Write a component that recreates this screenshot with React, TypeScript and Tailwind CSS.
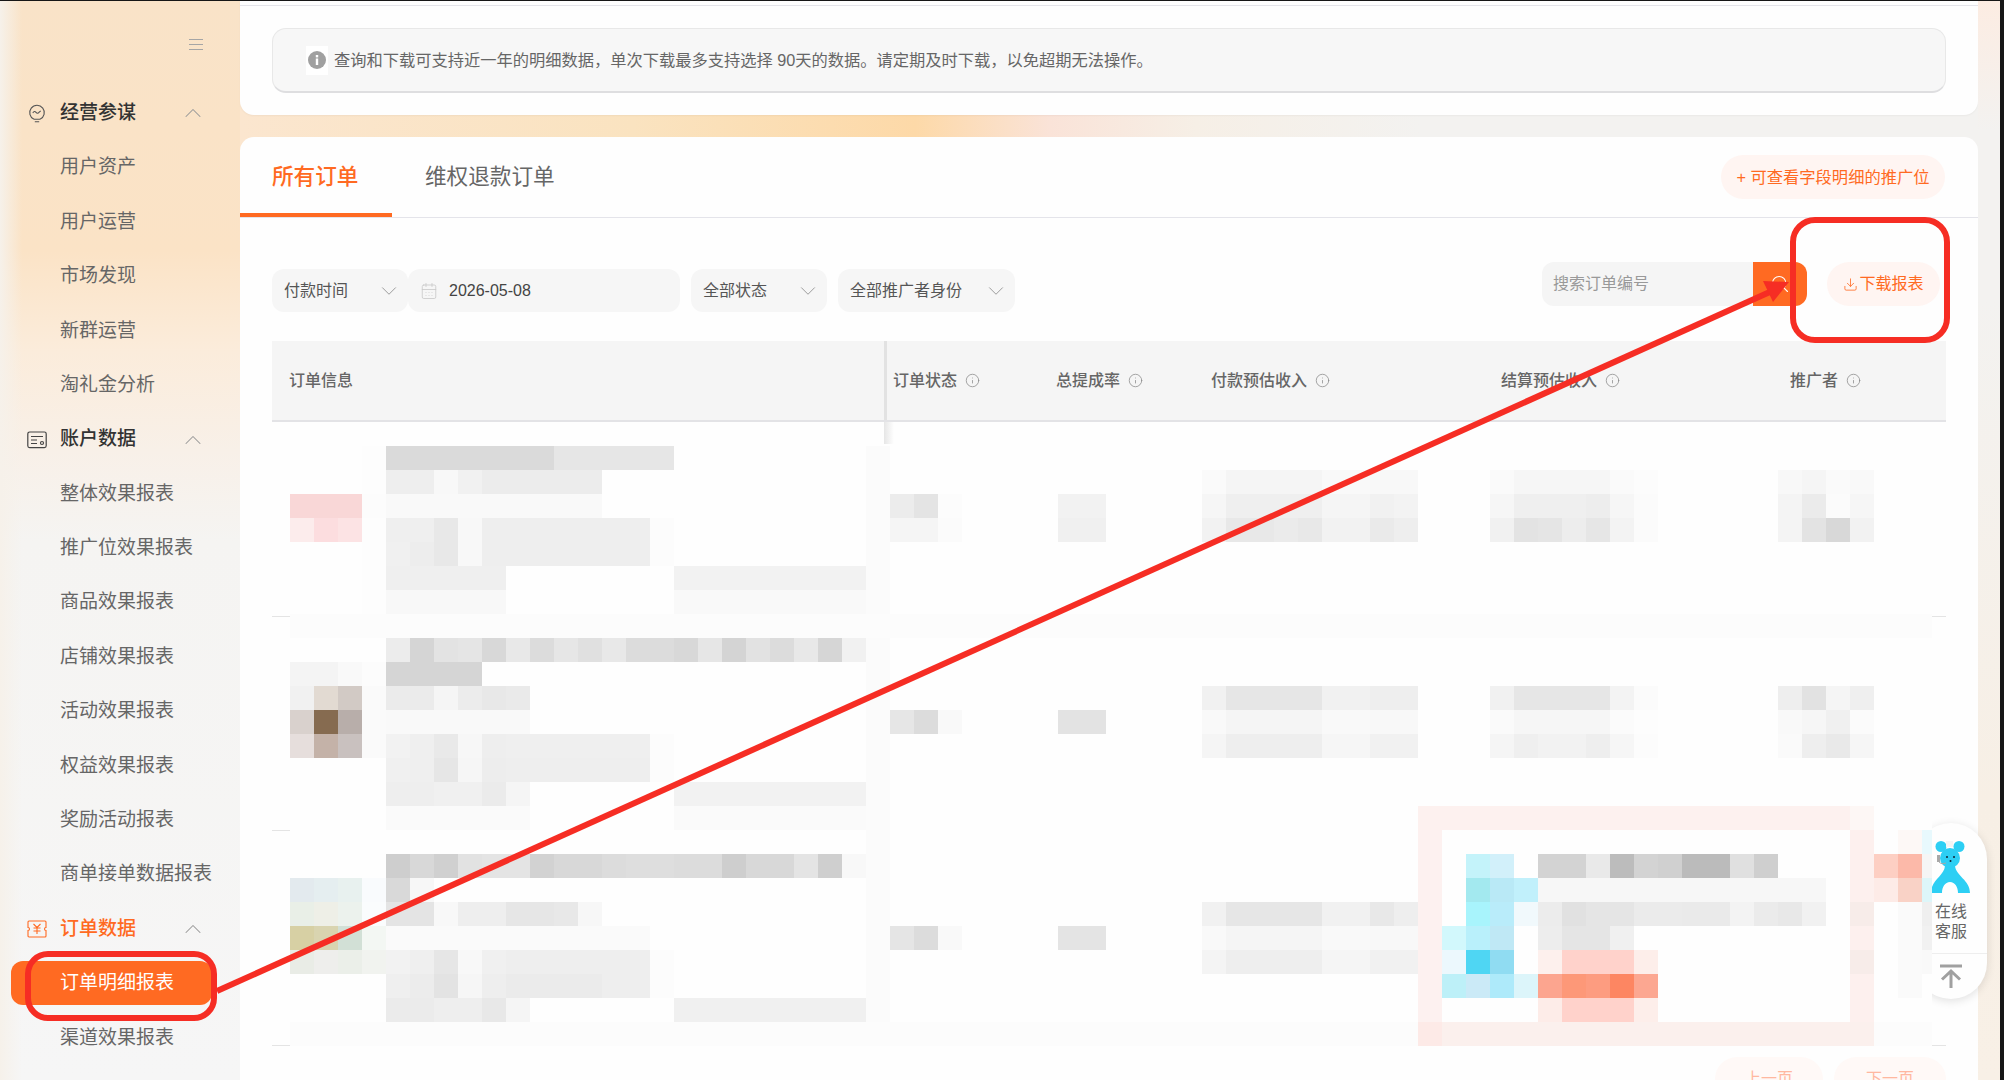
import { CalendarDays, ChevronDown, ChevronUp, Download, Info, Search } from "lucide-react";

type MenuItem = { label: string; group?: "bulb" | "account" | "order"; active?: boolean; orange?: boolean };

const menu: MenuItem[] = [
  { label: "经营参谋", group: "bulb" },
  { label: "用户资产" },
  { label: "用户运营" },
  { label: "市场发现" },
  { label: "新群运营" },
  { label: "淘礼金分析" },
  { label: "账户数据", group: "account" },
  { label: "整体效果报表" },
  { label: "推广位效果报表" },
  { label: "商品效果报表" },
  { label: "店铺效果报表" },
  { label: "活动效果报表" },
  { label: "权益效果报表" },
  { label: "奖励活动报表" },
  { label: "商单接单数据报表" },
  { label: "订单数据", group: "order", orange: true },
  { label: "订单明细报表", active: true },
  { label: "渠道效果报表" },
];

// [row, first column, colours]: "ee" is a grey, "ee*4" repeats it, six digits are a full colour
const mosaic: [number, number, string][] = [
  [0, 4, "da*7 e6*5"],
  [1, 4, "ee ee f8 f1 ec*5"], [1, 38, "fa f5*4 f9 f9 f8 f8"], [1, 50, "fa f6*4 fa fc"], [1, 62, "f8 f5 fa f9"],
  [2, 0, "f9d7d7*3 fc f9*9"], [2, 25, "ec e4 fc"], [2, 32, "f2 f2"], [2, 38, "f6 ef*4 f5 f5 f1 f3"], [2, 50, "f6 ef ef ef ed f6 fb"], [2, 62, "f4 eb fb f6"],
  [3, 0, "fcecec fcdddf fce3e4"], [3, 4, "ef ef e8 f8 ee*7 fc"], [3, 25, "f5 f5 fb"], [3, 32, "f0 f0"], [3, 38, "f2 e8 e8 eb e8 f2 f2 ea ee"], [3, 50, "f1 e3 e5 ed e6 f3 fb"], [3, 62, "f4 e3 d8 f2"],
  [4, 4, "f0 ed e8 f8 ee*7 fc"],
  [5, 4, "ef*5"], [5, 16, "f2*8"],
  [6, 4, "f8*5"], [6, 16, "f9*8"],
  [7, 0, "fc*69"],
  [8, 4, "ec d5 e3 e5 d8 e8 dc e6 e0 e8 dc dc d8 e6 d4 e2 dc e8 d6 f1"],
  [9, 0, "f4 f4 f9 fc d5*4"],
  [10, 0, "f1f1f1 e2dad2 d2cac5 fa eb eb f5 ec e8 ea"], [10, 38, "f1 e6*4 f1 f1 ee ee"], [10, 50, "f1 e6*4 f3 fb"], [10, 62, "ee e2 f5 ef"],
  [11, 0, "d9d1cd 866b50 b8aeaa fa f9*6"], [11, 25, "e6 dc f9"], [11, 32, "e3 e3"], [11, 38, "f9 f5*4 f9 f9 f8 f8"], [11, 50, "fa f6*4 fb fd"], [11, 62, "f9 f6 f0 fb"],
  [12, 0, "e6dedc c4b2a8 c9c1bf fa f2 ef e9 f7 ee ef*6 fc"], [12, 38, "f5 ee*4 f6 f6 f1 f1"], [12, 50, "f5 ef f2 f2 ee f6 fc"], [12, 62, "fa ee e9 f6"],
  [13, 4, "f0 ef e6 f6 ed ee*6 fc"],
  [14, 4, "ee ee f0 f0 eb f5"], [14, 16, "f2*8"],
  [15, 4, "fa*6"], [15, 16, "fa*8"], [15, 47, "fdf1ef*18 fdf7f5"],
  [16, 47, "fdf1f0"], [16, 65, "fdf0ee"], [16, 67, "fdf8f6 e8f9fd"],
  [17, 4, "ce d8 d0 e2 e4 e4 d2 d8 d8 dc de de dc dc ce d8 d8 e4 cf f8"], [17, 47, "fdf1f0"], [17, 49, "c4f3fa d2f0fa"], [17, 52, "d3 d3 e9 bc d3 d0 bb bb e0 cf"], [17, 65, "fdf0ee fdcfc3 fcb9a9 f5"],
  [18, 0, "e3eaee e5eef0 e8f1ef f9fbfd d9 f7"], [18, 47, "fdf1f0"], [18, 49, "a3e9ef b9e9f6 c1f0fb f7*12"], [18, 65, "fdf0ee fdebe7 f9d2c6 ddf6f9"],
  [19, 0, "e9efe7 eeefe7 ecf2ed fafcfd e4 e4 f8 ee ee e6 e6 e8 f7"], [19, 38, "f1 e6*4 f1 f1 e8 ee"], [19, 47, "fdf1f0"], [19, 49, "a8f4fc b9ecfa f1f9fc ec e1 e5 e5 eb eb ea ea f3 eb e8 f1"], [19, 65, "f7ece9"], [19, 67, "fa ef"],
  [20, 0, "d7d0a4 d9d4b0 d2e0d6 f3f7f3 fa*11"], [20, 25, "e5 dc f9"], [20, 32, "e4 e4"], [20, 38, "f9 f5*4 f9 f9 f8 f8"], [20, 47, "fdf1f0 d2f8fc b9f0fb bfe8f5"], [20, 52, "ed e5 e5 f0"], [20, 65, "fdf0ee"], [20, 67, "fa f1"],
  [21, 0, "e9ece6 eeeeec ebefe9 f1f3ef f2 ef e6 f8 f0 ee*6 fc"], [21, 38, "f4 ee*4 f5 f5 f1 f1"], [21, 47, "fdf1f0 ecf8fd 4fd6f3 90dcf2"], [21, 52, "fdf0ed ffd2cb*3 fdeeea"], [21, 65, "f7ece9"], [21, 67, "fa f9"],
  [22, 4, "ef ec e3 f6 ee eb*4 ee ee fc"], [22, 47, "fdf1f0 bdf0f8 cbeaf7 aeeafa dcf5fa fca58f fd9878 fd9c80 fd8662 fca791"], [22, 65, "fdf0ee"], [22, 67, "fa"],
  [23, 4, "eb eb ee ee e8 f5"], [23, 16, "f0*8"], [23, 47, "fdf1f0"], [23, 52, "fdece8 ffd2cb*3 fdeeea"], [23, 65, "fdf0ee"],
  [24, 0, "fc*47 fdeae7 fbf0ed*18 fc*3"],
];

function mosaicCells() {
  const cells: { x: number; y: number; fill: string }[] = [];
  for (const [row, start, text] of mosaic) {
    let col = start;
    for (const token of text.split(" ")) {
      const [c, times] = token.split("*");
      const fill = c.length === 2 ? `#${c}${c}${c}` : `#${c}`;
      for (let n = 0; n < Number(times ?? 1); n++) {
        cells.push({ x: col * 24, y: row * 24, fill });
        col++;
      }
    }
  }
  return cells;
}

function MenuIcon({ kind }: { kind: MenuItem["group"] }) {
  if (kind === "bulb") {
    return (
      <svg viewBox="0 0 20 20" className="w-[20px] h-[20px]" fill="none" stroke="#555" strokeWidth="1.1">
        <path d="M7 16.200A7.300 7.300 0 1 1 13 16.200" />
        <path d="M7 16.200h6M7.800 18.800h4.400" />
        <path d="M5.800 10c1.200-1.800 2.200-1.800 3.200-.6s2 1.200 3.200-.2l1.500-1.300" />
      </svg>
    );
  }
  if (kind === "account") {
    return (
      <svg viewBox="0 0 20 18" className="w-[20px] h-[18px]" fill="none" stroke="#444" strokeWidth="1.2">
        <rect x="0.800" y="1" width="18.400" height="15.600" rx="1.800" />
        <path d="M4 5.500h12M4 9h6M4 12.500h6" />
        <circle cx="15" cy="12" r="1.500" />
      </svg>
    );
  }
  return (
    <svg viewBox="0 0 20 18" className="w-[20px] h-[18px]" fill="none" stroke="#ff6a22" strokeWidth="1.100">
      <path d="M2 1h16a1 1 0 0 1 1 1v5.500a1.500 1.500 0 0 0 0 3V16a1 1 0 0 1-1 1H2a1 1 0 0 1-1-1v-5.500a1.500 1.500 0 0 0 0-3V2a1 1 0 0 1 1-1Z" />
      <path d="M6.500 4 10 7.500 13.500 4M6.500 8h7M6.500 11h7M10 7.500v6.500" />
    </svg>
  );
}

function Select({ label, width }: { label: string; width: string }) {
  return (
    <div className={`flex items-center justify-between h-[43px] pl-[12px] pr-[6px] bg-[#f6f6f6] rounded-[12px] text-[16px] text-[#555] ${width}`}>
      <span>{label}</span>
      <ChevronDown size={26} strokeWidth={0.9} color="#999" />
    </div>
  );
}

function HeadCell({ label, width }: { label: string; width: string }) {
  return (
    <div className={`flex items-center gap-[8px] text-[16px] font-medium text-[#666] ${width}`}>
      <span>{label}</span>
      <Info size={15} strokeWidth={1.2} color="#888" />
    </div>
  );
}

export default function App() {
  const cells = mosaicCells();

  return (
    <div className="relative w-[2004px] h-[1080px] overflow-hidden bg-[#161616] pt-px pr-[4px] font-['Liberation_Sans','Noto_Sans_CJK_SC',sans-serif]">
      <div className="flex h-[1079px] bg-[linear-gradient(to_right,#fbe6cf_240px,#fae3c0_634px,#fdd9a8_915px,#fae3d8_1050px,#f6efe6_1196px,#f3f2f0_1421px)]">
        {/* Sidebar */}
        <aside className="w-[240px] shrink-0 bg-[linear-gradient(to_right,#f6f1ea_0px,rgba(246,241,234,0)_22px),linear-gradient(to_bottom,#f9e3c8_0px,#fbe3c6_250px,#fbecdb_350px,#f8f0e8_450px,#f5f4f2_540px,#f6f6f6_1079px)]">
          <div className="h-[85px] pt-[38px] pl-[189px]">
            <div className="flex flex-col gap-[4px] w-[14px]">
              <div className="h-px bg-[#a5a5a5]" />
              <div className="h-px bg-[#a5a5a5]" />
              <div className="h-px bg-[#a5a5a5]" />
            </div>
          </div>
          {menu.map(m => {
            if (m.active) {
              return (
                <div key={m.label} className="h-[54.4px] flex items-center">
                  <div className="ml-[11px] w-[201px] h-[44px] pl-[49px] flex items-center rounded-[12px] bg-[#ff6a22] text-[19px] text-white">
                    {m.label}
                  </div>
                </div>
              );
            }
            if (m.group) {
              return (
                <div key={m.label} className="h-[54.4px] flex items-center pl-[27px]">
                  <div className="w-[33px]"><MenuIcon kind={m.group} /></div>
                  <span className={`w-[125px] text-[19px] font-medium ${m.orange ? "text-[#ff6a22]" : "text-[#333]"}`}>{m.label}</span>
                  <ChevronUp size={28} strokeWidth={0.9} color="#999" className="-ml-[6px]" />
                </div>
              );
            }
            return (
              <div key={m.label} className="h-[54.4px] flex items-center pl-[60px] text-[19px] text-[#666]">
                {m.label}
              </div>
            );
          })}
        </aside>

        {/* Main column */}
        <main className="w-[1738px] shrink-0">
          <section className="h-[114px] bg-[#fefefe] rounded-b-[14px] shadow-[0_1px_2px_rgba(0,0,0,0.04)]">
            <div className="h-[5px] border-b-[1.5px] border-[#e4e4ea]" />
            <div className="mt-[22px] mx-[32px] h-[65px] pl-[33px] flex items-center gap-[6px] bg-[#f7f7f7] border border-[#e8e8e8] border-b-[2px] border-b-[#dedee0] rounded-[14px] text-[16.25px] text-[#666]">
              <span className="w-[22px] h-[29px] flex items-center justify-center bg-white">
                <svg viewBox="0 0 18 18" className="w-[18px] h-[18px]">
                  <circle cx="9" cy="9" r="9" fill="#a0a0a0" />
                  <rect x="7.800" y="7.500" width="2.400" height="6.500" fill="#fff" />
                  <rect x="7.800" y="4" width="2.400" height="2.400" fill="#fff" />
                </svg>
              </span>
              <span>查询和下载可支持近一年的明细数据，单次下载最多支持选择 90天的数据。请定期及时下载，以免超期无法操作。</span>
            </div>
          </section>

          <section className="mt-[22px] h-[943px] overflow-hidden bg-[#fefefe] rounded-t-[14px]">
            {/* Tabs */}
            <div className="h-[81px] flex items-center border-b border-[#e4e4ea]">
              <div className="w-[152px] h-full flex items-center pl-[32px] pt-[4px] border-b-[4px] border-[#ff6a22] text-[21.6px] font-medium text-[#ff6a22]">所有订单</div>
              <div className="ml-[33px] text-[21.6px] text-[#666]">维权退款订单</div>
              <div className="ml-auto mr-[33px] h-[44px] w-[224px] flex items-center justify-center rounded-full bg-[#fff5f2] text-[16.3px] text-[#ff6a22]">+ 可查看字段明细的推广位</div>
            </div>

            {/* Filters */}
            <div className="h-[123px] mx-[32px] flex items-start justify-between">
              <div className="mt-[51px] flex">
                <Select label="付款时间" width="w-[136px]" />
                <div className="w-[272px] h-[43px] flex items-center gap-[11px] pl-[12px] bg-[#f6f6f6] rounded-[12px] text-[16px] text-[#444]">
                  <CalendarDays size={18} strokeWidth={1.1} color="#c8c8c8" />
                  <span>2026-05-08</span>
                </div>
                <Select label="全部状态" width="w-[136px] ml-[11px]" />
                <Select label="全部推广者身份" width="w-[177px] ml-[11px]" />
              </div>
              <div className="mt-[44px] mr-[6px] flex">
                <div className="w-[211px] h-[44px] pl-[11px] flex items-center bg-[#f5f5f5] rounded-l-[12px] text-[16px] text-[#999]">搜索订单编号</div>
                <div className="w-[54px] h-[44px] flex items-center justify-center bg-[#ff6a22] rounded-r-[12px]">
                  <Search size={20} strokeWidth={1.3} color="#fff" />
                </div>
                <div className="ml-[20px] w-[113px] h-[44px] flex items-center justify-center gap-[1px] rounded-full bg-[#fff5f2] text-[16px] text-[#ff6a22]">
                  <Download size={15} strokeWidth={1.3} />
                  <span>下载报表</span>
                </div>
              </div>
            </div>

            {/* Table */}
            <div className="mx-[32px]">
              <div className="h-[81px] flex items-stretch bg-[#f5f5f5] border-b-[2px] border-[#e3e3e6]">
                <div className="w-[615px] pl-[17px] flex items-center border-r-[3px] border-[#e2e2e2] text-[16px] font-medium text-[#666]">订单信息</div>
                <HeadCell label="订单状态" width="w-[163px] ml-[6px]" />
                <HeadCell label="总提成率" width="w-[155px]" />
                <HeadCell label="付款预估收入" width="w-[290px]" />
                <HeadCell label="结算预估收入" width="w-[289px]" />
                <HeadCell label="推广者" width="w-[155px]" />
              </div>

              <div className="relative">
                <div className="h-[195px] border-b-[1.5px] border-[#e4e4e4]" />
                <div className="h-[214px] border-b-[1.5px] border-[#e4e4e4]" />
                <div className="h-[215px] border-b-[1.5px] border-[#e4e4e4]" />
                <div className="absolute left-[612px] top-0 w-[10px] h-[22px] bg-[linear-gradient(to_right,#e6e6e6,#fefefe)]" />
                {/* Blurred order rows */}
                <svg width="1642" height="600" className="absolute left-[18px] top-[24px]">
                  <rect width="1642" height="600" fill="#fefefe" />
                  <rect x="576" width="24" height="600" fill="#fbfbfb" />
                  <rect x="72" width="24" height="168" fill="#fdfdfd" />
                  {cells.map((c, i) => (
                    <rect key={i} x={c.x} y={c.y} width="24" height="24" fill={c.fill} />
                  ))}
                </svg>
              </div>

              <div className="mt-[11px] flex justify-end gap-[11px] text-[16px] text-[#ffb8a0]">
                <div className="w-[108px] h-[44px] pt-[10px] text-center rounded-full bg-[#fff9f7]">上一页</div>
                <div className="w-[112px] h-[44px] pt-[10px] text-center rounded-full bg-[#fff9f7]">下一页</div>
              </div>
            </div>
          </section>
        </main>

        <div className="flex-1 bg-[linear-gradient(to_bottom,#fcece2_0px,#f3f2f0_130px,#f3f2f0_300px,#f7efe5_800px,#f8f0e6_1079px)]" />
      </div>

      {/* Floating service widget, its left side runs under the table */}
      <div className="absolute left-[1932px] top-[813px] w-[66px] h-[196px] overflow-hidden">
        <div className="-ml-[17px] mt-[10px] w-[72px] h-[176px] flex flex-col items-center pt-[17px] rounded-[36px] bg-[#fefefe] shadow-[0_2px_10px_rgba(0,0,0,0.12)]">
          <svg viewBox="0 0 40 53" className="w-[40px] h-[53px] shrink-0">
            <path d="M14 26h10c1 10 15 14 15 27H27c0-6-3-11-8-11s-8 5-8 11H0c0-13 13-17 14-27Z" fill="#2dcff4" />
            <circle cx="10" cy="6.500" r="5.500" fill="#2dcff4" />
            <circle cx="28" cy="6.500" r="5.500" fill="#2dcff4" />
            <ellipse cx="19" cy="18" rx="10" ry="10" fill="#2dcff4" />
            <rect x="15" y="1" width="7" height="6" fill="#f4f4f4" />
            <rect x="6" y="15" width="3" height="7" fill="#a8a8a8" />
            <path d="M8 22c2 2 4 2 7 1" fill="none" stroke="#a8a8a8" strokeWidth="1" />
            <circle cx="16" cy="17" r="1" fill="#123" />
            <circle cx="23" cy="17" r="1" fill="#123" />
            <circle cx="19.500" cy="21" r="1" fill="#123" />
          </svg>
          <div className="mt-[9px] w-[32px] text-[16px] leading-[20px] text-center text-[#666]">在线客服</div>
          <div className="mt-[11px] w-full h-px bg-[#eeeeee]" />
          <svg viewBox="0 0 24 24" className="mt-[10px] w-[24px] h-[24px]" fill="none" stroke="#a0a0a0" strokeWidth="3">
            <path d="M1 2h22" />
            <path d="M12 24V8M3 15.500 12 7l9 8.500" />
          </svg>
        </div>
      </div>

      {/* Red annotations drawn over the screenshot */}
      <svg width="2004" height="1080" className="absolute left-0 top-0 pointer-events-none" fill="none" stroke="#f62d24" strokeWidth="6">
        <rect x="28" y="954" width="186" height="64" rx="20" />
        <rect x="1793" y="220" width="154" height="120" rx="22" />
        <path d="M217 991 1772 291" />
        <polygon points="1763,281 1789,282 1773,302" fill="#f62d24" stroke="none" />
      </svg>
    </div>
  );
}
